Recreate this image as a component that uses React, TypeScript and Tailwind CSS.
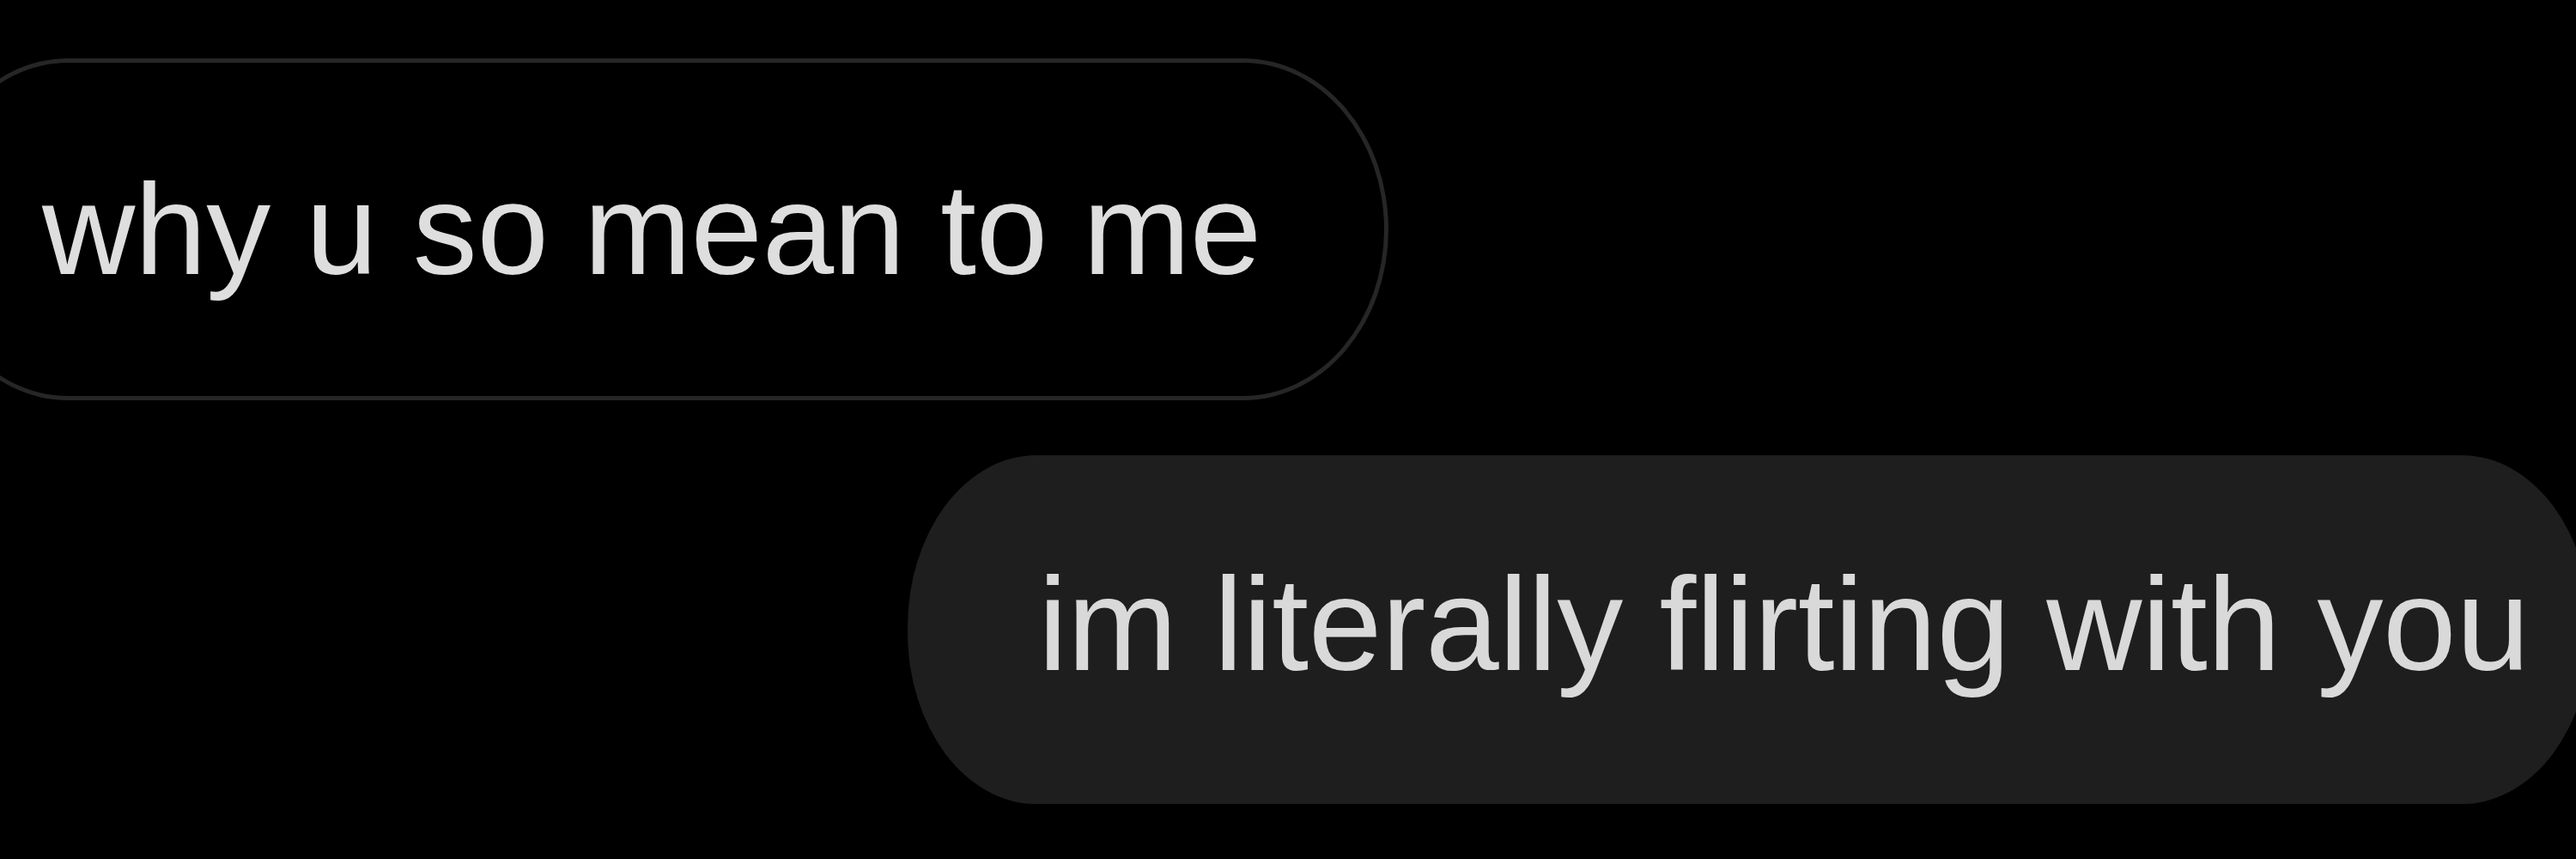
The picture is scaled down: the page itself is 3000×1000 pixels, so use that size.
export default function App() {
    return (
        <div
            className="w-[3000px] h-[1000px] bg-black overflow-hidden flex flex-col"
            style={{ fontFamily: '"Liberation Sans", Arial, sans-serif' }}
        >
            {/* Incoming message */}
            <div className="mt-[68px] ml-[-90px] w-[1707px] h-[398px] shrink-0 flex items-center pl-[134px] border-[5px] border-[#262626] rounded-[170px_/_200px]">
                <span className="text-[150px] leading-none tracking-[-0.3px] text-[#dedede] whitespace-nowrap">
                    why u so mean to me
                </span>
            </div>

            {/* Outgoing message */}
            <div className="mt-[64px] ml-[1057px] w-[1960px] h-[406px] shrink-0 flex items-center pl-[152px] pb-3 bg-[#1e1e1e] rounded-[150px_/_200px]">
                <span className="text-[154px] leading-none tracking-[-0.3px] text-[#d9d9d9] whitespace-nowrap">
                    im literally flirting with you
                </span>
            </div>
        </div>
    );
}
